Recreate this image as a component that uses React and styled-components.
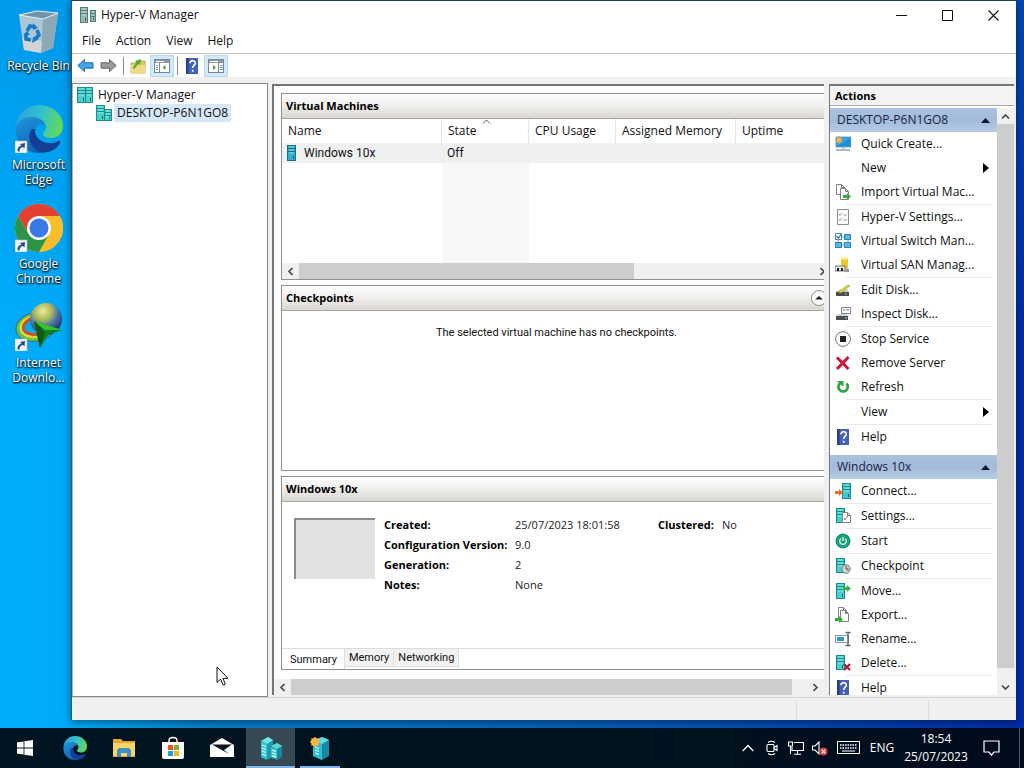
import React from 'react';
import styled, { createGlobalStyle } from 'styled-components';

const GlobalStyle = createGlobalStyle`
  *, *::before, *::after { box-sizing: border-box; }
  html, body, #root { height: 100%; margin: 0; }
  body {
    font-family: "Open Sans", "Noto Sans", sans-serif;
    font-size: 12px;
    line-height: 16px;
    color: #111;
    overflow: hidden;
  }
  button {
    font: inherit;
    color: inherit;
    background: none;
    border: 0;
    padding: 0;
    margin: 0;
    text-align: left;
    cursor: default;
  }
  ul { list-style: none; margin: 0; padding: 0; }
  h1, h2, h3, dl, dt, dd, p { margin: 0; font-size: inherit; }
  svg { display: block; flex: none; }
`;

/* ---------- desktop ---------- */

const Desktop = styled.div`
  height: 100vh;
  display: flex;
  flex-direction: column;
  background:
    linear-gradient(180deg, rgba(0, 120, 205, 0.35), rgba(0, 120, 205, 0) 45%),
    linear-gradient(90deg, #00aefc 0, #00a9f8 8%, #0680cc 20%, #0658b8 65%, #022ca8 100%);
`;

const Workspace = styled.main`
  flex: 1;
  min-height: 0;
  display: flex;
  padding: 0 8px 8px 0;
`;

const ShortcutColumn = styled.nav`
  width: 71px;
  flex: none;
  padding-left: 6px;
`;

const Shortcut = styled.button`
  width: 100%;
  height: 99px;
  padding-top: 6px;
  display: flex;
  flex-direction: column;
  align-items: center;
  justify-content: flex-start;
  gap: 4px;
  color: #fff;
  line-height: 15px;
  text-align: center;
  white-space: pre;
  text-shadow: 0 1px 2px #000, 1px 1px 2px rgba(0, 0, 0, 0.8);
`;

/* ---------- window frame ---------- */

const AppWindow = styled.section`
  flex: 1;
  min-width: 0;
  display: flex;
  flex-direction: column;
  background: #f0f0f0;
  border-left: 1px solid #2d5672;
  border-top: 1px solid #1d4258;
  box-shadow: 0 2px 8px rgba(0, 0, 0, 0.45);
`;

const TitleBar = styled.header`
  height: 30px;
  flex: none;
  display: flex;
  align-items: center;
  gap: 5px;
  padding: 0 0 2px 8px;
  background: #fff;
`;

const WindowTitle = styled.h1`
  flex: 1;
  font-weight: 400;
`;

const CaptionButtons = styled.div`
  display: flex;
  align-self: stretch;
`;

const CaptionButton = styled.button`
  width: 46px;
  display: flex;
  align-items: center;
  justify-content: center;
`;

const MenuBar = styled.nav`
  height: 22px;
  flex: none;
  display: flex;
  align-items: center;
  gap: 15px;
  padding: 0 0 2px 10px;
  background: #fff;
`;

const Toolbar = styled.div`
  height: 24px;
  flex: none;
  display: flex;
  align-items: center;
  padding-left: 2px;
  background: #fff;
  border-top: 1px solid #c4c4c4;
`;

const ToolButton = styled.button`
  width: ${(p) => (p.$wide ? 24 : 23)}px;
  height: 22px;
  display: flex;
  align-items: center;
  justify-content: center;
  background: ${(p) => (p.$pressed ? '#d3e9f9' : 'transparent')};
  border: 1px solid ${(p) => (p.$pressed ? '#b4dbf5' : 'transparent')};
`;

const ToolDivider = styled.span`
  width: 1px;
  height: 18px;
  margin: 0 2px 0 3px;
  background: #8c8c8c;
`;

const Body = styled.div`
  flex: 1;
  min-height: 0;
  display: flex;
  gap: 4px;
  padding: 6px 2px 0 0;
`;

const StatusBar = styled.footer`
  height: 23px;
  flex: none;
  display: flex;
  justify-content: flex-end;
  border-top: 1px solid #d6d6d6;
`;

const StatusCell = styled.span`
  width: ${(p) => p.$w}px;
  margin-top: 2px;
  border-left: 1px solid #dcdcdc;
`;

/* ---------- tree ---------- */

const TreePane = styled.aside`
  position: relative;
  width: 196px;
  flex: none;
  padding: 2px 0 0 4px;
  background: #fff;
  border: 1px solid #828790;
  border-left-color: #b0b4b8;
`;

const TreeItem = styled.button`
  height: 18px;
  margin-left: ${(p) => p.$level * 19}px;
  display: flex;
  align-items: center;
  gap: 2px;
`;

const TreeLabel = styled.span`
  height: 18px;
  padding: 0 3px;
  line-height: 18px;
  background: ${(p) => (p.$selected ? '#d5e8f9' : 'transparent')};
`;

const Pointer = styled.svg`
  position: absolute;
  left: 143px;
  bottom: 10px;
`;

/* ---------- centre ---------- */

const CenterPane = styled.div`
  flex: 1;
  min-width: 0;
  display: flex;
  flex-direction: column;
  margin: 1px 0 2px;
  background: #fff;
  border-left: 2px solid #73777b;
  border-top: 2px solid #73777b;
`;

const CenterScroller = styled.div`
  flex: 1;
  min-height: 0;
  overflow: hidden;
  padding: 7px 0 9px 7px;
`;

const CenterStack = styled.div`
  width: calc(100% + 8px);
  height: 100%;
  display: flex;
  flex-direction: column;
  gap: 5px;
`;

const Group = styled.section`
  display: flex;
  flex-direction: column;
  flex: ${(p) => (p.$h ? 'none' : '1')};
  height: ${(p) => (p.$h ? p.$h + 'px' : 'auto')};
  min-height: 0;
  border: 1px solid #8f8f8f;
`;

const GroupHeader = styled.header`
  height: 25px;
  flex: none;
  display: flex;
  align-items: center;
  justify-content: space-between;
  padding: 0 4px;
  background: linear-gradient(180deg, #fefefe, #f3f2f0 40%, #d9d7d0);
  border-bottom: 1px solid #a9a79e;
`;

const GroupTitle = styled.h2`
  font-size: 11px;
  font-weight: 700;
  color: #000;
`;

const CollapseButton = styled.button`
  width: 16px;
  height: 16px;
`;

const TableArea = styled.div`
  flex: 1;
  min-height: 0;
`;

const MachineTable = styled.table`
  width: 100%;
  height: 100%;
  table-layout: fixed;
  border-collapse: separate;
  border-spacing: 0;
`;

const Col = styled.col`
  width: ${(p) => (p.$w ? p.$w + 'px' : 'auto')};
  background: ${(p) => (p.$sorted ? '#f7f7f7' : 'transparent')};
`;

const HeadCell = styled.th`
  position: relative;
  height: 24px;
  padding: 0 0 0 6px;
  font-weight: 400;
  text-align: left;
  white-space: nowrap;
  background: #fff;
  border-right: 1px solid #e5e5e5;
`;

const SortMark = styled.svg`
  position: absolute;
  left: 40px;
  top: 0;
`;

const Cell = styled.td`
  height: 20px;
  padding: 0 0 0 5px;
  font-family: Roboto, "Liberation Sans", sans-serif;
  white-space: nowrap;
  background: #f0f0f0;
`;

const NameCell = styled.div`
  display: flex;
  align-items: center;
  gap: 7px;
`;

const FillCell = styled.td`
  padding: 0;
`;

const ScrollTrackH = styled.div`
  height: 16px;
  flex: none;
  display: flex;
  background: #f0f0f0;
`;

const ScrollTrackV = styled.div`
  width: 17px;
  flex: none;
  display: flex;
  flex-direction: column;
  background: #f0f0f0;
`;

const ScrollButton = styled.button`
  flex: none;
  width: 17px;
  height: 16px;
  display: flex;
  align-items: center;
  justify-content: center;
`;

const ScrollRail = styled.div`
  flex: 1;
  min-width: 0;
  min-height: 0;
`;

const ScrollThumb = styled.div`
  width: ${(p) => p.$w || '100%'};
  height: ${(p) => p.$h || '100%'};
  background: #cdcdcd;
`;

const EmptyNote = styled.p`
  padding-top: 14px;
  font-family: Roboto, "Liberation Sans", sans-serif;
  font-size: 11px;
  text-align: center;
`;

const Summary = styled.div`
  flex: 1;
  min-height: 0;
  display: flex;
  align-items: flex-start;
  gap: 9px;
  padding: 16px 0 0 12px;
`;

const Thumbnail = styled.div`
  width: 81px;
  height: 61px;
  flex: none;
  background: #e2e2e2;
  border-top: 2px solid #8b8b8b;
  border-left: 2px solid #8b8b8b;
`;

const Facts = styled.dl`
  display: grid;
  grid-template-columns: 131px 113px;
  margin-top: -3px;
  font-size: 11px;
  line-height: 20px;
  white-space: nowrap;
`;

const ExtraFacts = styled(Facts)`
  grid-template-columns: 64px auto;
  margin-left: 21px;
`;

const FactName = styled.dt`
  font-weight: 700;
  color: #000;
`;

const FactValue = styled.dd`
  color: #222;
`;

const TabStrip = styled.div`
  height: 21px;
  flex: none;
  display: flex;
  align-items: flex-start;
  border-top: 1px solid #dcdcdc;
`;

const Tab = styled.button`
  height: ${(p) => (p.$active ? 20 : 18)}px;
  padding: ${(p) => (p.$active ? '2px 7px 0 8px' : '0 4px')};
  font-family: Roboto, "Liberation Sans", sans-serif;
  font-size: 11px;
  background: ${(p) => (p.$active ? '#fff' : '#f2f2f2')};
  border: solid #dedede;
  border-width: ${(p) => (p.$active ? '0 1px 0 0' : '0 1px 1px 0')};
`;

/* ---------- actions ---------- */

const ActionsPane = styled.aside`
  width: 185px;
  flex: none;
  display: flex;
  flex-direction: column;
  margin: 1px 0 2px 1px;
  background: #fff;
  border-left: 1px solid #73777b;
  border-top: 2px solid #73777b;
`;

const ActionsTitle = styled.h2`
  height: 20px;
  flex: none;
  padding-left: 5px;
  font-size: 11px;
  line-height: 20px;
  font-weight: 700;
  color: #000;
  background: #f3f3f3;
  border-bottom: 1px solid #a8a8a8;
`;

const ActionsBody = styled.div`
  flex: 1;
  min-height: 0;
  display: flex;
  padding-top: 2px;
`;

const ActionsList = styled.div`
  flex: 1;
  min-width: 0;
  overflow: hidden;
`;

const ActionHeading = styled.button`
  width: 100%;
  height: 24px;
  display: flex;
  align-items: center;
  justify-content: space-between;
  padding: 0 7px;
  color: #16243c;
  background: linear-gradient(180deg, #aac2df, #a2bbdb 50%, #b6cbe5);
`;

const ActionItems = styled.ul`
  margin-bottom: 6px;
`;

const ActionRow = styled.li`
  height: ${(p) => (p.$ruled ? 25 : 24)}px;
  &::after {
    content: "";
    display: ${(p) => (p.$ruled ? 'block' : 'none')};
    height: 1px;
    margin: 0 4px 0 16px;
    background: #e9e9e9;
  }
`;

const ActionButton = styled.button`
  width: 100%;
  height: 24px;
  display: flex;
  align-items: center;
  gap: 10px;
  padding: 0 8px 0 5px;
  white-space: nowrap;
`;

const ActionText = styled.span`
  flex: 1;
`;

const IconSlot = styled.span`
  width: 16px;
  height: 16px;
  flex: none;
`;

/* ---------- taskbar ---------- */

const Taskbar = styled.footer`
  height: 40px;
  flex: none;
  display: flex;
  align-items: stretch;
  padding-right: 4px;
  color: #fff;
  background: linear-gradient(90deg, #001521, #00131f 60%, #000b1c);
`;

const TaskButton = styled.button`
  width: ${(p) => (p.$first ? 50 : 49)}px;
  display: flex;
  align-items: center;
  justify-content: center;
  background: ${(p) => (p.$active ? '#384854' : 'transparent')};
  background-image: ${(p) => (p.$open ? 'linear-gradient(#7fb6ea, #7fb6ea)' : 'none')};
  background-repeat: no-repeat;
  background-position: center bottom;
  background-size: ${(p) => (p.$active ? '100%' : '40px')} 2px;
`;

const Tray = styled.div`
  margin-left: auto;
  display: flex;
  align-items: center;
`;

const TrayButton = styled.button`
  width: ${(p) => p.$w || 24}px;
  height: 40px;
  display: flex;
  align-items: center;
  justify-content: center;
`;

const Clock = styled.button`
  width: 72px;
  line-height: 18px;
  text-align: center;
`;

const ShowDesktop = styled.button`
  width: 1px;
  height: 40px;
  margin-left: 9px;
  background: #4a5866;
`;

/* ---------- drawings ---------- */

const Rack = ({ x = 0, y = 0, w = 8, h = 14, fill = '#48cfcb', line = '#1b8c8c' }) => (
  <g transform={`translate(${x} ${y})`}>
    <rect x=".5" y=".5" width={w - 1} height={h - 1} fill={fill} stroke={line} />
    <path d={`M1 3.500H${w - 1}M1 6.500H${w - 1}`} stroke={line} />
    <rect x={w - 3} y={h - 5} width="1" height="3" fill="#075f66" />
    <path d={`M2 2H${w - 2}M2 5H${w - 2}M2 8H${w - 2}`} stroke="#b8fff6" opacity=".6" />
  </g>
);

const Arrow = ({ x, y, fill }) => (
  <path
    transform={`translate(${x} ${y})`}
    d="M0 2h4V0l4 3.500L4 7V5H0z"
    fill={fill}
  />
);

const Page = ({ x = 0, y = 0, h = 12 }) => (
  <path
    transform={`translate(${x} ${y})`}
    d={`M.5 .5H5.500L8.500 3.500V${h - 0.5}H.5zM5.500 .5V3.500H8.500`}
    fill="#fff"
    stroke="#828282"
  />
);

const icons = {
  quick: (
    <>
      <rect x="1" y="1" width="15" height="10" fill="#35a4e4" stroke="#2a7fb8" strokeWidth=".6" />
      <path d="M2 10 16 2v8z" fill="#1f8fd6" />
      <path d="M4 0v8M0 4h8M1.200 1.200l5.600 5.600M6.800 1.200 1.200 6.800" stroke="#e7a437" strokeWidth="1.200" />
      <circle cx="4" cy="4" r="2.300" fill="#f5b84c" />
      <path d="M1 14h14" stroke="#99a3ad" strokeWidth="1.500" />
      <path d="M7 11h3v2H7z" fill="#c4cdd4" />
    </>
  ),
  import: (
    <>
      <Page x={1} y={0} h={11} />
      <Page x={5} y={4} h={12} />
      <Arrow x={8} y={9} fill="#38a83c" />
    </>
  ),
  settings: (
    <>
      <path d="M2.500 .5h11v15h-11z" fill="#fafafa" stroke="#8b8b8b" />
      <path d="m4 5 1 1.500L7 4m-3 6 1 1.500L7 9M8.500 6H12M8.500 11H12" fill="none" stroke="#9aa0a6" />
    </>
  ),
  switch: (
    <>
      <path d="M3 7v4M13 7v4M5 4h6M5 12h6" stroke="#8ca0ac" />
      <rect x=".5" y=".5" width="6" height="6" fill="#fff" stroke="#4a90bf" />
      <path d="m1.500 3 2 2 3-4" fill="none" stroke="#2473a8" strokeWidth="1.200" />
      <rect x="9.500" y="1.500" width="6" height="5" fill="#53b9ec" stroke="#2f86bc" />
      <rect x=".5" y="9.500" width="6" height="5" fill="#53b9ec" stroke="#2f86bc" />
      <rect x="9.500" y="9.500" width="6" height="5" fill="#53b9ec" stroke="#2f86bc" />
    </>
  ),
  san: (
    <>
      <path d="M6 1.500Q9.500 0 13 1.500V13H6z" fill="#efc62e" />
      <ellipse cx="9.500" cy="1.800" rx="3.500" ry="1.300" fill="#ffe879" />
      <path d="M0 9h10v5H0z" fill="#ececec" stroke="#555" strokeWidth=".8" />
      <path d="M2 11h2v3H2zM6 11h2v3H6z" fill="#222" />
      <path d="M10 12h4v3h-4z" fill="#999" />
    </>
  ),
  edit: (
    <>
      <path d="m3 8 9-1 2 3H1z" fill="#c6cdd0" />
      <path d="M1 10h13v4H1z" fill="#4a4d4e" />
      <path d="m3 10 10-7 2 1-9 7z" fill="#d9d83a" stroke="#8d8a22" strokeWidth=".5" />
      <path d="M10 12h2" stroke="#7bdc5c" />
    </>
  ),
  inspect: (
    <>
      <rect x="6.500" y="1.500" width="9" height="6" fill="#fff" stroke="#7e8a96" />
      <path d="M8 4h2M11 4h3" stroke="#5c6a78" />
      <path d="m3 8 9 0 1 2H1z" fill="#ced3d6" />
      <path d="M1 10h12v4H1z" fill="#4d5053" />
      <path d="M10 12h2" stroke="#a9c7a0" />
    </>
  ),
  stop: (
    <>
      <circle cx="8" cy="8" r="7.400" fill="#fff" stroke="#777" />
      <path d="M5 5h6v6H5z" fill="#222" />
    </>
  ),
  remove: <path d="M2 2.500 13.500 14M13.500 2 2 14" stroke="#d2133a" strokeWidth="3" />,
  refresh: (
    <>
      <path d="M5 4.200A4.700 4.700 0 1 0 11.500 4.500" fill="none" stroke="#2fa544" strokeWidth="2.800" />
      <path d="M2 2h6.500v6z" fill="#2fa544" />
    </>
  ),
  help: (
    <>
      <rect x="2" y="0" width="12" height="16" fill="#4460b8" />
      <path d="M2 0h2.500v16H2z" fill="#273f8f" />
      <path d="M6 5.200C6 1.800 11.600 2 11.300 5.200 11.200 7.300 8.700 7 8.700 10M8.700 11.800v2" fill="none" stroke="#fff" strokeWidth="1.700" />
    </>
  ),
  connect: (
    <>
      <Rack x={7} y={0} w={9} h={16} fill="#3ec9d3" />
      <Arrow x={0} y={6} fill="#ee6a26" />
    </>
  ),
  vmsettings: (
    <>
      <Rack x={1} y={0} w={9} h={15} />
      <Page x={7} y={4} h={11} />
      <path d="m9 10 1 2 3-4" fill="none" stroke="#888" />
    </>
  ),
  start: (
    <>
      <circle cx="8" cy="8" r="7" fill="#16a37e" stroke="#0a8262" />
      <path d="M5.800 5.600a3.300 3.300 0 1 0 4.400 0M8 4v4" fill="none" stroke="#fff" strokeWidth="1.200" />
    </>
  ),
  checkpoint: (
    <>
      <Rack x={1} y={0} w={9} h={15} />
      <circle cx="11" cy="11" r="4.200" fill="#d7d7d2" stroke="#777" />
      <path d="M11 8v3h2.500" fill="none" stroke="#444" />
      <path d="M11 11h3l-1 2z" fill="#4d9a43" />
    </>
  ),
  move: (
    <>
      <Rack x={1} y={0} w={9} h={16} />
      <Arrow x={8} y={2} fill="#37b13f" />
    </>
  ),
  export: (
    <>
      <Page x={3} y={0} h={12} />
      <Page x={5} y={3} h={12} />
      <Arrow x={0} y={9} fill="#35ae3a" />
    </>
  ),
  rename: (
    <>
      <path d="M.5 4.500h13v7H.5z" fill="#fff" stroke="#8895a0" />
      <path d="M2 6h7v4H2z" fill="#3295d2" />
      <path d="M10.500 1.500h5M10.500 14.500h5M13 1.500v13" stroke="#5c656c" strokeWidth="1.400" />
    </>
  ),
  delete: (
    <>
      <Rack x={1} y={0} w={9} h={15} />
      <path d="m9 9 6 6m0-6-6 6" stroke="#b8153a" strokeWidth="2.200" />
    </>
  ),
};

const Icon = ({ name }) => (
  <svg width="16" height="16" viewBox="0 0 16 16" aria-hidden="true">
    {icons[name]}
  </svg>
);

const Triangle = () => (
  <svg width="9" height="5" viewBox="0 0 9 5" aria-hidden="true">
    <path d="M4.500 0 9 5H0z" fill="#0b1730" />
  </svg>
);

const chevrons = {
  left: 'M6.500 1 3 4.500 6.500 8',
  right: 'M2.500 1 6 4.500 2.500 8',
  up: 'M1 6.500 4.500 3 8 6.500',
  down: 'M1 2.500 4.500 6 8 2.500',
};

const Chevron = ({ dir }) => (
  <svg width="9" height="9" viewBox="0 0 9 9" aria-hidden="true">
    <path d={chevrons[dir]} fill="none" stroke="#484848" strokeWidth="1.700" />
  </svg>
);

const EdgeLogo = ({ size }) => (
  <svg width={size} height={size} viewBox="0 0 48 48" aria-hidden="true">
    <defs>
      <linearGradient id="edgeTop" x1="0" y1=".3" x2="1" y2=".5">
        <stop offset="0" stopColor="#2aa0dc" />
        <stop offset=".5" stopColor="#32c2cf" />
        <stop offset="1" stopColor="#64d956" />
      </linearGradient>
      <linearGradient id="edgeMid" x1="0" y1="0" x2=".6" y2="1">
        <stop offset="0" stopColor="#2296dd" />
        <stop offset="1" stopColor="#0e5db2" />
      </linearGradient>
    </defs>
    <path d="M1 22C2 9 12 0 24 0c14 0 24 10 24 21 0 8-6 12-12 12-5 0-8-2-8-4s3-3 3-7c0-5-6-9-13-9C9 13 3 17 1 22z" fill="url(#edgeTop)" />
    <path d="M1 22C3 15 10 12 17 12c6 0 11 3 13 7-5-2-10 1-10 8 0 9 7 16 17 16-4 3-8 5-13 5C10 48-1 36 1 22z" fill="url(#edgeMid)" />
    <path d="M17 24c-5 6-3 17 6 22 5 3 14 1 18-3 3-3 5-6 4-7s-5 3-12 2c-9-1-14-8-13-14z" fill="#123f93" />
  </svg>
);

const ShortcutBadge = () => (
  <g transform="translate(0 36)">
    <rect width="12" height="12" fill="#f4f8fb" stroke="#a8b6c2" strokeWidth=".6" />
    <path d="M2.500 10.500c0-4 1.500-5.500 4-5.800L5 3l5-1-.5 5.500L8 6C5.500 6.500 4.500 8 4.500 10.500z" fill="#23498f" />
  </g>
);

const RecycleBin = () => (
  <svg width="48" height="48" viewBox="0 0 48 48" aria-hidden="true">
    <path d="M4 9 28 13 43 7 38 42 26 47 9 44z" fill="#b9c9d4" opacity=".93" />
    <path d="M28 13 43 7 38 42 26 47z" fill="#8fa8b8" />
    <path d="M4 9 22 5 43 7 28 13z" fill="#7294a8" stroke="#e9f2f6" />
    <path d="M7 32l20 3-1 12-17-3z" fill="#ddd8d3" opacity=".8" />
    <g fill="none" stroke="#1579c9" strokeWidth="3.600">
      <path d="m12 25 3-5 5 1" />
      <path d="m22 24 2 5-4 4" />
      <path d="m16 34-5-1 0-5" />
    </g>
    <path d="m18 17 5 5-5 2zM24 33l-7 4 1-6zM8 29l4-4 3 4z" fill="#1579c9" />
  </svg>
);

const ChromeLogo = () => (
  <svg width="48" height="48" viewBox="0 0 48 48" aria-hidden="true">
    <circle cx="24" cy="24" r="24" fill="#f9bd2c" />
    <path d="M3.200 12A24 24 0 0 1 44.800 12H24L14 30z" fill="#e3402f" />
    <path d="M3.200 12 13.600 30 24 36 25 48A24 24 0 0 1 3.200 12z" fill="#2a9549" />
    <path d="M34.400 30 24 48h1L14 30h20z" fill="#2a9549" />
    <path d="M24 12h20.800A24 24 0 0 1 24 48l11-19z" fill="#f9bd2c" />
    <circle cx="24" cy="24" r="12" fill="#fff" />
    <circle cx="24" cy="24" r="9.500" fill="#3a78e7" />
    <ShortcutBadge />
  </svg>
);

const DownloadManager = () => (
  <svg width="48" height="48" viewBox="0 0 48 48" aria-hidden="true">
    <defs>
      <radialGradient id="globe" cx=".4" cy=".25" r=".8">
        <stop offset="0" stopColor="#f0eb9a" />
        <stop offset=".35" stopColor="#a9b75c" />
        <stop offset=".6" stopColor="#4773ae" />
        <stop offset="1" stopColor="#15294f" />
      </radialGradient>
    </defs>
    <g fill="none" strokeWidth="2.600" transform="rotate(-12 20 24)">
      <ellipse cx="21" cy="24" rx="20" ry="14" stroke="#3c58c5" strokeWidth="1.500" />
      <ellipse cx="21" cy="24" rx="18.500" ry="12.500" stroke="#5fc82c" />
      <ellipse cx="21.500" cy="23.500" rx="16" ry="10.500" stroke="#f0d52d" />
      <ellipse cx="22" cy="23" rx="13.500" ry="8.500" stroke="#d94a1b" />
    </g>
    <circle cx="31" cy="16" r="16" fill="url(#globe)" />
    <path d="M19 18 47 27 34 31 25 45z" fill="#12801f" />
    <path d="M19 18 47 27 30 27z" fill="#35c42e" />
    <path d="M19 18 30 29 25 45z" fill="#0a5b18" />
    <ShortcutBadge />
  </svg>
);

const EdgeShortcut = () => (
  <svg width="48" height="48" viewBox="0 0 48 48" aria-hidden="true">
    <EdgeLogo size={48} />
    <ShortcutBadge />
  </svg>
);

const TreeRacks = ({ small }) => (
  <svg width="16" height="16" viewBox="0 0 16 16" aria-hidden="true">
    {small ? (
      <>
        <Rack x={0} y={0} w={9} h={16} />
        <Rack x={8} y={4} w={8} h={12} />
      </>
    ) : (
      <>
        <Rack x={0} y={0} w={9} h={16} />
        <Rack x={8} y={0} w={8} h={16} />
      </>
    )}
  </svg>
);

const TitleRacks = () => (
  <svg width="16" height="16" viewBox="0 0 16 16" aria-hidden="true">
    <Rack x={0} y={0} w={8} h={16} fill="#93b9b0" line="#5b7b77" />
    <Rack x={10} y={3} w={6} h={12} fill="#93b9b0" line="#5b7b77" />
  </svg>
);

const NavArrow = ({ fill, line, forward }) => (
  <svg width="17" height="15" viewBox="0 0 17 15" aria-hidden="true">
    <path
      transform={forward ? 'translate(17 0) scale(-1 1)' : undefined}
      d="M.8 7.500 7.500 1.500V4.800H16v5.400H7.500v3.300z"
      fill={fill}
      stroke={line}
    />
  </svg>
);

const FolderUp = () => (
  <svg width="16" height="16" viewBox="0 0 16 16" aria-hidden="true">
    <path d="M1 5h5l1.500-2H15v12H1z" fill="#e5c766" stroke="#b99a42" strokeWidth=".8" />
    <path d="M1 7h14v8H1z" fill="#f1d984" />
    <path d="M2.500 10 6.500 4.500 5 3l6-2-1 6-1.500-1.500L4.500 11z" fill="#4fae31" />
  </svg>
);

const PaneIcon = ({ right }) => (
  <svg width="16" height="14" viewBox="0 0 16 14" aria-hidden="true">
    <rect x=".5" y=".5" width="15" height="13" fill="#fff" stroke="#7c8894" />
    <path d="M1 1h14v3H1z" fill="#8b98a5" />
    <path d="M2 2.500h8" stroke="#fff" />
    <path d={right ? 'M10.500 4v9' : 'M5.500 4v9'} stroke="#7c8894" />
    <path d={right ? 'M12 6.500h3M12 8.500h3M12 10.500h3' : 'M2 6.500h2M2 8.500h2M2 10.500h2'} stroke="#6f9cc4" />
    <path d={right ? 'M5 6v5l3-2.500z' : 'M11.500 6v5l-3-2.500z'} fill="#569b33" />
  </svg>
);

/* ---------- data ---------- */

const shortcuts = [
  { label: 'Recycle Bin', art: <RecycleBin /> },
  { label: 'Microsoft\nEdge', art: <EdgeShortcut /> },
  { label: 'Google\nChrome', art: <ChromeLogo /> },
  { label: 'Internet\nDownlo...', art: <DownloadManager /> },
];

const hostActions = [
  { label: 'Quick Create...', icon: 'quick' },
  { label: 'New', more: true },
  { label: 'Import Virtual Mac...', icon: 'import', ruled: true },
  { label: 'Hyper-V Settings...', icon: 'settings' },
  { label: 'Virtual Switch Man...', icon: 'switch' },
  { label: 'Virtual SAN Manag...', icon: 'san', ruled: true },
  { label: 'Edit Disk...', icon: 'edit' },
  { label: 'Inspect Disk...', icon: 'inspect', ruled: true },
  { label: 'Stop Service', icon: 'stop' },
  { label: 'Remove Server', icon: 'remove' },
  { label: 'Refresh', icon: 'refresh', ruled: true },
  { label: 'View', more: true, ruled: true },
  { label: 'Help', icon: 'help' },
];

const machineActions = [
  { label: 'Connect...', icon: 'connect', ruled: true },
  { label: 'Settings...', icon: 'vmsettings', ruled: true },
  { label: 'Start', icon: 'start', ruled: true },
  { label: 'Checkpoint', icon: 'checkpoint', ruled: true },
  { label: 'Move...', icon: 'move' },
  { label: 'Export...', icon: 'export' },
  { label: 'Rename...', icon: 'rename' },
  { label: 'Delete...', icon: 'delete', ruled: true },
  { label: 'Help', icon: 'help' },
];

/* ---------- parts ---------- */

const HorizontalScroll = ({ thumb }) => (
  <ScrollTrackH>
    <ScrollButton aria-label="Scroll left"><Chevron dir="left" /></ScrollButton>
    <ScrollRail><ScrollThumb $w={thumb} /></ScrollRail>
    <ScrollButton aria-label="Scroll right"><Chevron dir="right" /></ScrollButton>
  </ScrollTrackH>
);

const ActionGroup = ({ title, items }) => (
  <>
    <ActionHeading>{title}<Triangle /></ActionHeading>
    <ActionItems>
      {items.map((item) => (
        <ActionRow key={item.label} $ruled={item.ruled}>
          <ActionButton>
            <IconSlot>{item.icon && <Icon name={item.icon} />}</IconSlot>
            <ActionText>{item.label}</ActionText>
            {item.more && (
              <svg width="6" height="10" viewBox="0 0 6 10" aria-hidden="true">
                <path d="M0 0 6 5 0 10z" fill="#000" />
              </svg>
            )}
          </ActionButton>
        </ActionRow>
      ))}
    </ActionItems>
  </>
);

const MachinesGroup = () => (
  <Group $h={187}>
    <GroupHeader><GroupTitle>Virtual Machines</GroupTitle></GroupHeader>
    <TableArea>
      <MachineTable>
        <colgroup>
          <Col $w={160} />
          <Col $w={87} $sorted />
          <Col $w={87} />
          <Col $w={120} />
          <Col />
        </colgroup>
        <thead>
          <tr>
            <HeadCell>Name</HeadCell>
            <HeadCell aria-sort="ascending">
              State
              <SortMark width="9" height="5" viewBox="0 0 9 5" aria-hidden="true">
                <path d="M1 4.500 4.500 1 8 4.500" fill="none" stroke="#555" />
              </SortMark>
            </HeadCell>
            <HeadCell>CPU Usage</HeadCell>
            <HeadCell>Assigned Memory</HeadCell>
            <HeadCell>Uptime</HeadCell>
          </tr>
        </thead>
        <tbody>
          <tr>
            <Cell>
              <NameCell>
                <svg width="10" height="16" viewBox="0 0 10 16" aria-hidden="true">
                  <Rack w={9} h={16} fill="#36aecb" line="#14708c" />
                </svg>
                Windows 10x
              </NameCell>
            </Cell>
            <Cell>Off</Cell>
            <Cell />
            <Cell />
            <Cell />
          </tr>
          <tr aria-hidden="true">
            <FillCell />
            <FillCell />
            <FillCell />
            <FillCell />
            <FillCell />
          </tr>
        </tbody>
      </MachineTable>
    </TableArea>
    <HorizontalScroll thumb="65%" />
  </Group>
);

const CheckpointsGroup = () => (
  <Group>
    <GroupHeader>
      <GroupTitle>Checkpoints</GroupTitle>
      <CollapseButton aria-label="Collapse checkpoints">
        <svg width="16" height="16" viewBox="0 0 16 16" aria-hidden="true">
          <circle cx="8" cy="8" r="7.500" fill="#fff" stroke="#8d8d8d" />
          <path d="M8 6 12 9.500H4z" fill="#222" />
        </svg>
      </CollapseButton>
    </GroupHeader>
    <EmptyNote>The selected virtual machine has no checkpoints.</EmptyNote>
  </Group>
);

const DetailsGroup = () => (
  <Group $h={194}>
    <GroupHeader><GroupTitle>Windows 10x</GroupTitle></GroupHeader>
    <Summary>
      <Thumbnail />
      <Facts>
        <FactName>Created:</FactName><FactValue>25/07/2023 18:01:58</FactValue>
        <FactName>Configuration Version:</FactName><FactValue>9.0</FactValue>
        <FactName>Generation:</FactName><FactValue>2</FactValue>
        <FactName>Notes:</FactName><FactValue>None</FactValue>
      </Facts>
      <ExtraFacts>
        <FactName>Clustered:</FactName><FactValue>No</FactValue>
      </ExtraFacts>
    </Summary>
    <TabStrip role="tablist">
      <Tab role="tab" aria-selected="true" $active>Summary</Tab>
      <Tab role="tab" aria-selected="false">Memory</Tab>
      <Tab role="tab" aria-selected="false">Networking</Tab>
    </TabStrip>
  </Group>
);

const HyperVTask = () => (
  <svg width="24" height="24" viewBox="0 0 24 24" aria-hidden="true">
    <path d="M2 5 9 1l5 3v17L7 24l-5-3z" fill="#1c9fb0" />
    <path d="m2 5 7-4 5 3-6 4z" fill="#72e3e0" />
    <path d="m12 10 6-3 5 3v11l-5 3-6-2z" fill="#15899c" />
    <path d="m12 10 6-3 5 3-5 3z" fill="#5ed6d6" />
    <path d="M2 6l6 2v15l-6-2zM12 11l6 2v10l-6-2z" fill="#38c5cb" />
    <path d="m3 9 4 1.500M3 12l4 1.500M3 15l4 1.500M3 18l4 1.500M13 14l4 1.500M13 17l4 1.500M13 20l4 1" stroke="#d4ffff" strokeWidth="1.300" />
  </svg>
);

const QuickCreateTask = () => (
  <svg width="24" height="24" viewBox="0 0 24 24" aria-hidden="true">
    <path d="M5 5 14 1l7 3v16l-7 4-9-4z" fill="#1687a2" />
    <path d="M5 5l9 3v16l-9-4z" fill="#31bdcf" />
    <path d="m5 5 9-4 7 3-7 4z" fill="#62dae0" />
    <path d="m7 11 4 1.500M7 14l4 1.500M7 17l4 1.500" stroke="#d5ffff" strokeWidth="1.300" />
    <path d="M7 1v10M2 6h10M3.500 2.500l7 7M10.500 2.500l-7 7" stroke="#f0a52d" strokeWidth="1.600" />
    <circle cx="7" cy="6" r="4" fill="#f9b63b" />
  </svg>
);

const TaskbarRow = () => (
  <Taskbar>
    <TaskButton aria-label="Start" $first>
      <svg width="16" height="16" viewBox="0 0 16 16" fill="#fff">
        <path d="M0 2.300 6.600 1.400V7.600H0zM7.400 1.300 16 0V7.600H7.400zM0 8.400H6.600v6.200L0 13.700zM7.400 8.400H16V16l-8.600-1.300z" />
      </svg>
    </TaskButton>
    <TaskButton aria-label="Microsoft Edge"><EdgeLogo size={24} /></TaskButton>
    <TaskButton aria-label="File Explorer">
      <svg width="22" height="20" viewBox="0 0 22 20">
        <path d="M0 1h8l2 2h12v16H0z" fill="#e6a62f" />
        <path d="M0 5h22v13H0z" fill="#fbd568" />
        <path d="M4 19v-7l2-2h10l2 2v7h-4v-4H8v4z" fill="#418fc4" />
      </svg>
    </TaskButton>
    <TaskButton aria-label="Microsoft Store">
      <svg width="24" height="24" viewBox="0 0 24 24">
        <path d="M8 6V4.500C8 .5 16 .5 16 4.500V6" fill="none" stroke="#fff" strokeWidth="1.400" />
        <path d="M1 6h22v15q0 2-2 2H3q-2 0-2-2z" fill="#fff" />
        <path d="M7 9h5v5H7z" fill="#e9512a" />
        <path d="M13 9h5v5h-5z" fill="#7db526" />
        <path d="M7 15h5v5H7z" fill="#1c9fe0" />
        <path d="M13 15h5v5h-5z" fill="#f8b517" />
      </svg>
    </TaskButton>
    <TaskButton aria-label="Mail">
      <svg width="24" height="20" viewBox="0 0 24 20">
        <path d="M0 7 12 0l12 7v12H0z" fill="#fff" />
        <path d="M2 6.500h20L14 12l5 4z" fill="#04131d" />
      </svg>
    </TaskButton>
    <TaskButton aria-label="Hyper-V Manager" $active $open><HyperVTask /></TaskButton>
    <TaskButton aria-label="Hyper-V Quick Create" $open><QuickCreateTask /></TaskButton>

    <Tray>
      <TrayButton aria-label="Show hidden icons">
        <svg width="12" height="8" viewBox="0 0 12 8" fill="none" stroke="#fff" strokeWidth="1.300">
          <path d="M.7 7 6 1.500 11.300 7" />
        </svg>
      </TrayButton>
      <TrayButton aria-label="Meet Now">
        <svg width="12" height="16" viewBox="0 0 12 16" fill="none" stroke="#fff" strokeWidth="1.100">
          <rect x="1" y="4.500" width="7" height="7" rx="1" />
          <path d="m8 7.500 3-2v5l-3-2M2 2.500q3.500-2.500 7 0M2 13.500q3.500 2.500 7 0" />
        </svg>
      </TrayButton>
      <TrayButton aria-label="Network">
        <svg width="16" height="14" viewBox="0 0 16 14" fill="none" stroke="#fff" strokeWidth="1.100">
          <path d="M6 1.500h9.500v8H4V6M9.500 9.500v3.500M6 13.300h7M.5 1h4v4h-4zM2.500 5v8" />
        </svg>
      </TrayButton>
      <TrayButton aria-label="Volume muted">
        <svg width="16" height="15" viewBox="0 0 16 15" fill="none" stroke="#fff" strokeWidth="1.100">
          <path d="M.5 5H3l4-4v12L3 9H.5z" />
          <circle cx="11.500" cy="10.500" r="4" fill="#d33b40" stroke="none" />
          <path d="m9.700 8.700 3.600 3.600m0-3.600-3.600 3.600" />
        </svg>
      </TrayButton>
      <TrayButton $w={32} aria-label="Touch keyboard">
        <svg width="23" height="14" viewBox="0 0 23 14" fill="none" stroke="#fff">
          <path d="M.5 .5h22v12H.5z" />
          <path d="M3 4h17M3 7h17" strokeDasharray="1.500 1" strokeWidth="1.300" />
          <path d="M5 10h13" />
        </svg>
      </TrayButton>
      <TrayButton $w={36}>ENG</TrayButton>
      <Clock>18:54<br />25/07/2023</Clock>
      <TrayButton $w={38} aria-label="Notifications">
        <svg width="17" height="16" viewBox="0 0 17 16" fill="none" stroke="#fff" strokeWidth="1.200">
          <path d="M1 1h15v11h-5l-2.500 3L6 12H1z" />
        </svg>
      </TrayButton>
    </Tray>
    <ShowDesktop aria-label="Show desktop" />
  </Taskbar>
);

export default function App() {
  return (
    <>
      <GlobalStyle />
      <Desktop>
        <Workspace>
          <ShortcutColumn aria-label="Desktop">
            {shortcuts.map((s) => (
              <Shortcut key={s.label}>{s.art}{s.label}</Shortcut>
            ))}
          </ShortcutColumn>

          <AppWindow>
            <TitleBar>
              <TitleRacks />
              <WindowTitle>Hyper-V Manager</WindowTitle>
              <CaptionButtons>
                <CaptionButton aria-label="Minimize">
                  <svg width="11" height="11" viewBox="0 0 11 11"><path d="M0 5.500h11" stroke="#111" /></svg>
                </CaptionButton>
                <CaptionButton aria-label="Maximize">
                  <svg width="11" height="11" viewBox="0 0 11 11"><path d="M.5 .5h10v10H.5z" fill="none" stroke="#111" /></svg>
                </CaptionButton>
                <CaptionButton aria-label="Close">
                  <svg width="11" height="11" viewBox="0 0 11 11"><path d="m.5 .5 10 10m0-10-10 10" stroke="#111" strokeWidth="1.100" /></svg>
                </CaptionButton>
              </CaptionButtons>
            </TitleBar>

            <MenuBar>
              <button>File</button>
              <button>Action</button>
              <button>View</button>
              <button>Help</button>
            </MenuBar>

            <Toolbar>
              <ToolButton aria-label="Back"><NavArrow fill="#45a7e6" line="#1f6cab" /></ToolButton>
              <ToolButton aria-label="Forward"><NavArrow fill="#999" line="#666" forward /></ToolButton>
              <ToolDivider />
              <ToolButton $wide aria-label="Up"><FolderUp /></ToolButton>
              <ToolButton $wide $pressed aria-label="Show console tree"><PaneIcon /></ToolButton>
              <ToolDivider />
              <ToolButton $wide aria-label="Help"><Icon name="help" /></ToolButton>
              <ToolButton $wide $pressed aria-label="Show action pane"><PaneIcon right /></ToolButton>
            </Toolbar>

            <Body>
              <TreePane>
                <TreeItem $level={0}><TreeRacks /><TreeLabel>Hyper-V Manager</TreeLabel></TreeItem>
                <TreeItem $level={1}><TreeRacks small /><TreeLabel $selected>DESKTOP-P6N1GO8</TreeLabel></TreeItem>
                <Pointer width="13" height="20" viewBox="0 0 13 20" aria-hidden="true">
                  <path d="M1 1v15.500l3.600-3.400 2.500 6 2.300-1-2.500-5.800H12z" fill="#fff" stroke="#111" />
                </Pointer>
              </TreePane>

              <CenterPane>
                <CenterScroller>
                  <CenterStack>
                    <MachinesGroup />
                    <CheckpointsGroup />
                    <DetailsGroup />
                  </CenterStack>
                </CenterScroller>
                <HorizontalScroll thumb="97%" />
              </CenterPane>

              <ActionsPane>
                <ActionsTitle>Actions</ActionsTitle>
                <ActionsBody>
                  <ActionsList>
                    <ActionGroup title="DESKTOP-P6N1GO8" items={hostActions} />
                    <ActionGroup title="Windows 10x" items={machineActions} />
                  </ActionsList>
                  <ScrollTrackV>
                    <ScrollButton aria-label="Scroll up"><Chevron dir="up" /></ScrollButton>
                    <ScrollRail><ScrollThumb $h="98%" /></ScrollRail>
                    <ScrollButton aria-label="Scroll down"><Chevron dir="down" /></ScrollButton>
                  </ScrollTrackV>
                </ActionsBody>
              </ActionsPane>
            </Body>

            <StatusBar>
              <StatusCell $w={132} />
              <StatusCell $w={88} />
            </StatusBar>
          </AppWindow>
        </Workspace>
        <TaskbarRow />
      </Desktop>
    </>
  );
}
